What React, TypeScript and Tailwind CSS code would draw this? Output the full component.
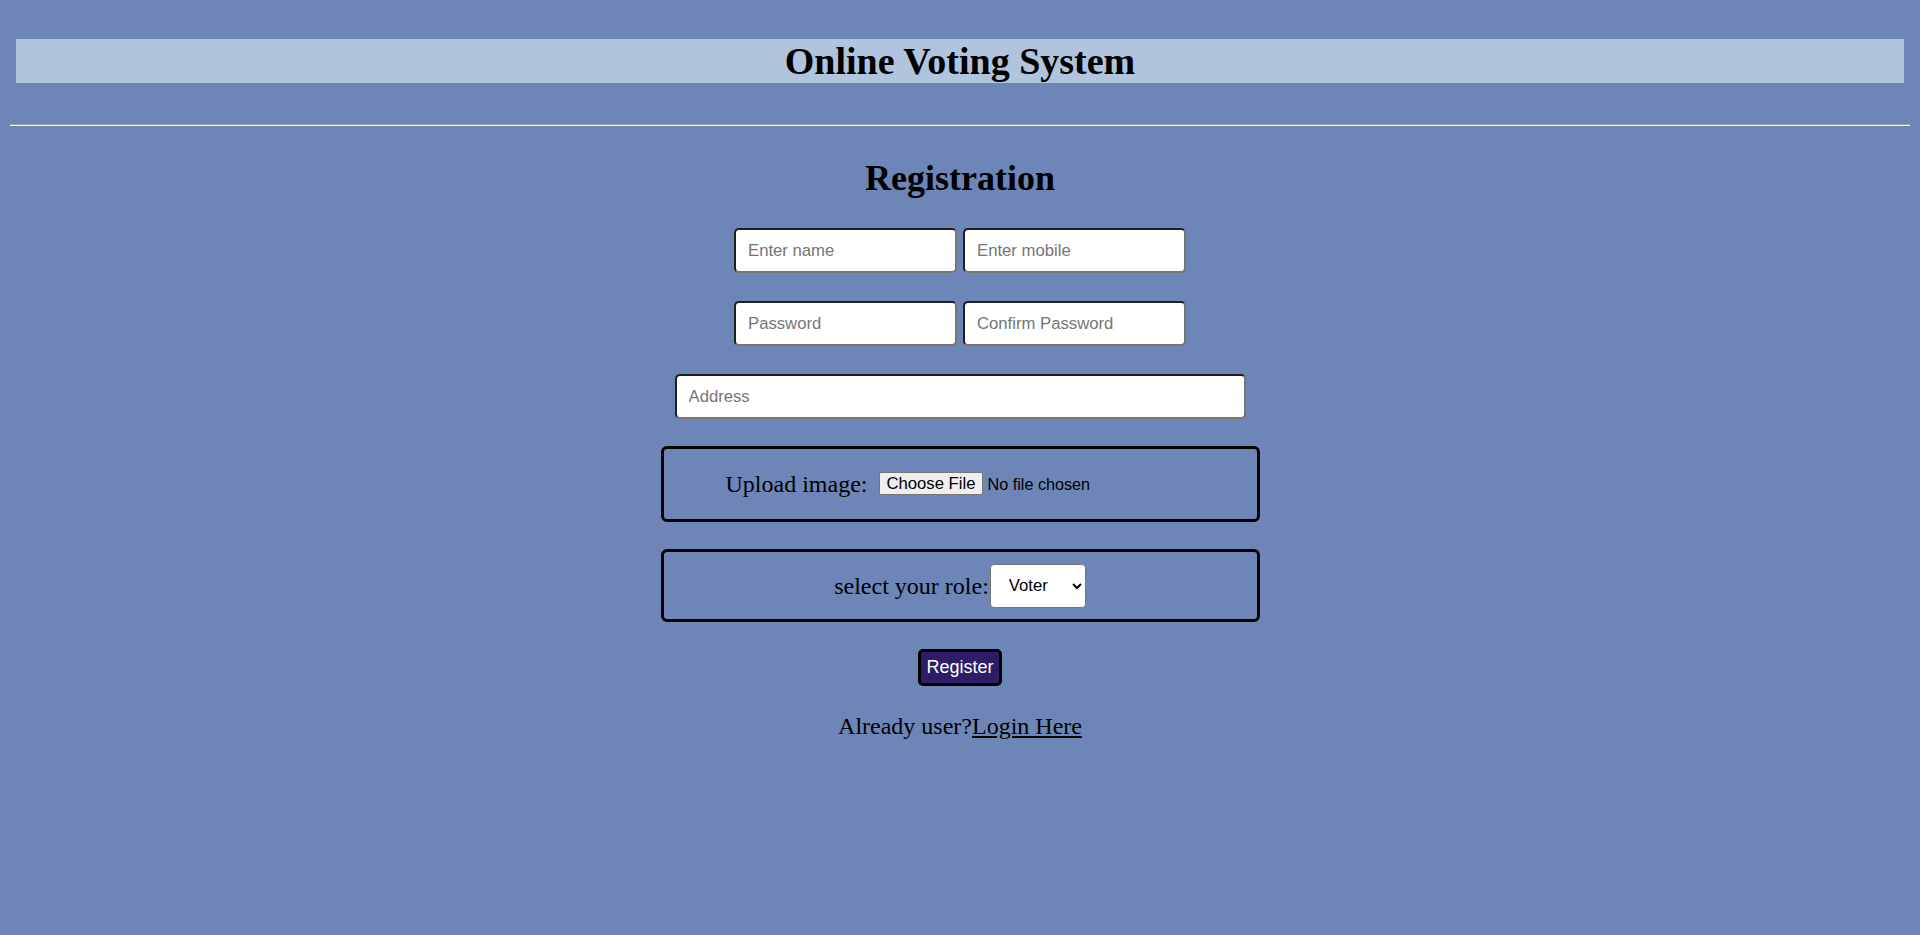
import { useState } from 'react';

const inputClass =
    "w-[223px] h-[45px] bg-white rounded-[5px] border-2 border-t-[#1f1f1f] border-l-[#1f1f1f] border-b-[#767676] border-r-[#767676] pl-[12px] text-[16.7px] text-black placeholder:text-[#757575] outline-none";

const App = () => {
    const [role, setRole] = useState("Voter");

    return (
        <div className="min-h-screen w-full bg-[#6d85b7] px-[10px] pt-[39px] font-['Liberation_Serif',serif] text-black">

            <div className="mx-[6px] h-[44px] bg-[#b0c4de]">
                <h1 className="text-center text-[38px] font-bold leading-[44px]">Online Voting System</h1>
            </div>

            <hr className="mt-[41px] h-0 border-t border-b border-t-[#a3a3a3] border-b-[#eeeeee]" />

            <h2 className="mt-[32px] text-center text-[36px] font-bold leading-[41px]">Registration</h2>

            <form className="flex flex-col items-center font-['Liberation_Sans',Arial,sans-serif]" onSubmit={(e) => e.preventDefault()}>
                <div className="mt-[29px] flex gap-[6px]">
                    <input type="text" placeholder="Enter name" className={inputClass} />
                    <input type="text" placeholder="Enter mobile" className={inputClass} />
                </div>
                <div className="mt-[28px] flex gap-[6px]">
                    <input type="password" placeholder="Password" className={inputClass} />
                    <input type="password" placeholder="Confirm Password" className={inputClass} />
                </div>
                <input
                    type="text"
                    placeholder="Address"
                    className="mt-[28px] w-[571px] h-[45px] bg-white rounded-[5px] border-2 border-t-[#1f1f1f] border-l-[#1f1f1f] border-b-[#767676] border-r-[#767676] pl-[12px] text-[16.7px] placeholder:text-[#757575] outline-none"
                />

                <div className="mt-[27px] flex h-[76px] w-[599px] items-center rounded-[6px] border-[3px] border-black pl-[62px]">
                    <span className="mr-[12px] font-['Liberation_Serif',serif] text-[24px]">Upload image:</span>
                    <label className="flex items-center text-[16.7px] cursor-pointer">
                        <input type="file" className="hidden" />
                        <span className="h-[23px] rounded-[2px] border border-[#767676] bg-[#efefef] px-[6px] leading-[21px]">Choose File</span>
                        <span className="ml-[5px] text-[16.2px]">No file chosen</span>
                    </label>
                </div>

                <div className="mt-[27px] flex h-[73px] w-[599px] items-center justify-center rounded-[6px] border-[3px] border-black">
                    <span className="font-['Liberation_Serif',serif] text-[24px]">select your role:</span>
                    <select
                        value={role}
                        onChange={(e) => setRole(e.target.value)}
                        className="ml-[1px] h-[44px] w-[96px] rounded-[4px] border border-[#767676] bg-white pl-[14px] text-[16.7px] text-black"
                    >
                        <option value="Voter">Voter</option>
                        <option value="Candidate">Candidate</option>
                    </select>
                </div>

                <button
                    type="submit"
                    className="mt-[27px] h-[37px] w-[84px] rounded-[5px] border-[3px] border-black bg-[#2e1c67] text-[18px] text-white"
                >
                    Register
                </button>

                <p className="mt-[26px] font-['Liberation_Serif',serif] text-[24px] leading-[28px]">
                    Already user?<a href="#" className="text-black underline">Login Here</a>
                </p>
            </form>

        </div>
    )
}

export default App;
